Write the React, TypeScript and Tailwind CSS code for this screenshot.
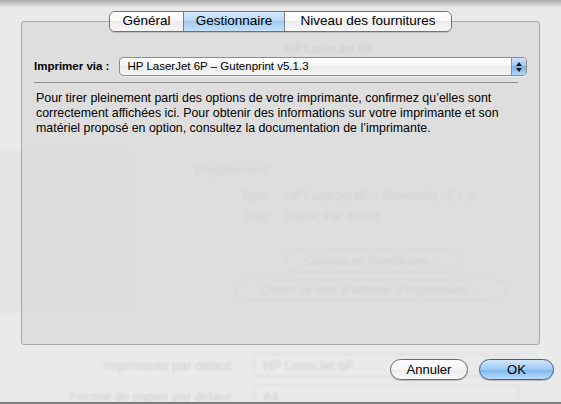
import React from 'react';

const font = { fontFamily: '"Liberation Sans", Arial, sans-serif' };

// faded content of the window behind the sheet
function GhostWindow() {
  return (
    <div className="pointer-events-none absolute inset-0 flex flex-col blur-[1.2px] text-[12px] text-[#bcbcbc]">
      <div className="pl-[285px] pt-[42px] font-bold leading-[14px]">HP LaserJet 6P</div>
      <div className="mt-[94px] flex">
        <div className="h-[163px] w-[133px] bg-[#e4e4e4]" />
        <div className="flex flex-1 flex-col pt-[13px]">
          <div className="grid grid-cols-[141px_1fr] gap-x-[11px] gap-y-[7px] leading-[14px]">
            <span className="text-right">Emplacement :</span>
            <span />
            <span className="mt-[5px] text-right">Type :</span>
            <span className="mt-[5px]">HP LaserJet 6P – Gutenprint v5.1.3</span>
            <span className="text-right">État :</span>
            <span>Inactif, Par défaut</span>
          </div>
          <div className="ml-[152px] mt-[26px] flex h-[22px] w-[177px] items-center justify-center rounded-full border border-[#c4c4c4] text-[13px]">
            Options et fournitures…
          </div>
          <div className="ml-[102px] mt-[7px] flex h-[22px] w-[272px] items-center justify-center rounded-full border border-[#c4c4c4] text-[13px]">
            Ouvrir la liste d’attente d’impression…
          </div>
        </div>
      </div>
      <div className="mt-[41px] flex flex-col gap-[8px] text-[13px] text-[#d0d0d0]">
        {[
          ['Imprimante par défaut :', 'HP LaserJet 6P'],
          ['Format de papier par défaut :', 'A4'],
        ].map(([label, value]) => (
          <div key={label} className="flex items-center gap-[16px]">
            <span className="w-[238px] text-right">{label}</span>
            <div className="flex h-[23px] w-[265px] items-center border border-[#dadada] px-2">{value}</div>
          </div>
        ))}
      </div>
    </div>
  );
}

function Tabs() {
  const tabs = [
    { t: 'Général', w: 'w-[73px]' },
    { t: 'Gestionnaire', w: 'w-[102px] border-x border-[#6f7f95]' },
    { t: 'Niveau des fournitures', w: 'flex-1' },
  ];
  return (
    <div className="relative z-10 mx-auto flex h-[21px] w-[343px] shrink-0 overflow-hidden rounded-[6px] border border-[#717171] text-[13.5px] text-black shadow-[0_1px_1px_rgba(0,0,0,0.15)]">
      {tabs.map(({ t, w }, i) => (
        <div
          key={t}
          className={
            'flex items-center justify-center whitespace-nowrap ' +
            w +
            ' ' +
            (i === 1
              ? 'bg-[linear-gradient(#d6e8fb,#b6d6f7_50%,#9fcaf3_50%,#c6e2fb)]'
              : 'bg-[linear-gradient(#ffffff,#f7f7f7_50%,#ececec_50%,#f7f7f7)]')
          }
        >
          {t}
        </div>
      ))}
    </div>
  );
}

function Popup() {
  return (
    <div className="flex h-[19px] flex-1 overflow-hidden rounded-[4px] border border-[#8c8c8c] bg-[linear-gradient(#ffffff,#f4f4f4_50%,#ebebeb_50%,#f6f6f6)] shadow-[0_1px_0_rgba(255,255,255,0.5)]">
      <div className="flex flex-1 items-center pl-[7px] text-[11.5px] text-black">HP LaserJet 6P – Gutenprint v5.1.3</div>
      <div className="flex w-[15px] flex-col items-center justify-center gap-[2px] border-l border-[#6f8fb8] bg-[linear-gradient(#cfe3fa,#9cc6f2_50%,#7fb3ec_50%,#b4d6f8)]">
        <svg width="6" height="4" viewBox="0 0 6 4"><path d="M3 0 L6 4 L0 4 Z" fill="#1a1a1a" /></svg>
        <svg width="6" height="4" viewBox="0 0 6 4"><path d="M0 0 L6 0 L3 4 Z" fill="#1a1a1a" /></svg>
      </div>
    </div>
  );
}

function Button({ label, primary }: { label: string; primary?: boolean }) {
  return (
    <div
      className={
        'flex h-[21px] items-center justify-center rounded-full border text-[13px] text-black shadow-[0_1px_1px_rgba(0,0,0,0.2)] ' +
        (primary
          ? 'w-[75px] border-[#3d5f8c] bg-[linear-gradient(#d0e6fb,#9ecbf4_50%,#7ab5ee_50%,#b9dcfb)]'
          : 'w-[78px] border-[#6b6b6b] bg-[linear-gradient(#ffffff,#f5f5f5_50%,#e9e9e9_50%,#fafafa)]')
      }
    >
      {label}
    </div>
  );
}

export default function App() {
  return (
    <div style={font} className="relative h-[404px] w-[561px] overflow-hidden bg-[#eaeaea]">
      <GhostWindow />
      <div className="pointer-events-none absolute inset-x-0 top-0 h-[8px] bg-[linear-gradient(rgba(0,0,0,0.28),rgba(0,0,0,0))]" />

      <div className="relative flex flex-col px-[21px] pt-[11px]">
        <Tabs />
        <div className="-mt-[11px] flex h-[324px] flex-col rounded-[3px] border border-[#a8a8a8] bg-[#d9d9d9]/[0.72] px-[12px] pt-[35px]">
          <div className="flex items-center gap-[10px]">
            <span className="text-[11.5px] font-bold text-black">Imprimer via :</span>
            <Popup />
          </div>
          <div className="mr-[9px] mt-[6px] h-px bg-[#8e8e8e]" />
          <p className="mt-[8px] pl-[2px] text-[12.4px] leading-[15px] text-black">
            Pour tirer pleinement parti des options de votre imprimante, confirmez qu’elles sont correctement affichées ici. Pour obtenir des informations sur votre imprimante et son matériel proposé en option, consultez la documentation de l’imprimante.
          </p>
        </div>
        <div className="-mr-[14px] mt-[14px] flex justify-end gap-[11px]">
          <Button label="Annuler" />
          <Button label="OK" primary />
        </div>
      </div>

      <div className="absolute inset-x-0 bottom-0 h-[2px] bg-[#7c7c7c]" />
    </div>
  );
}
